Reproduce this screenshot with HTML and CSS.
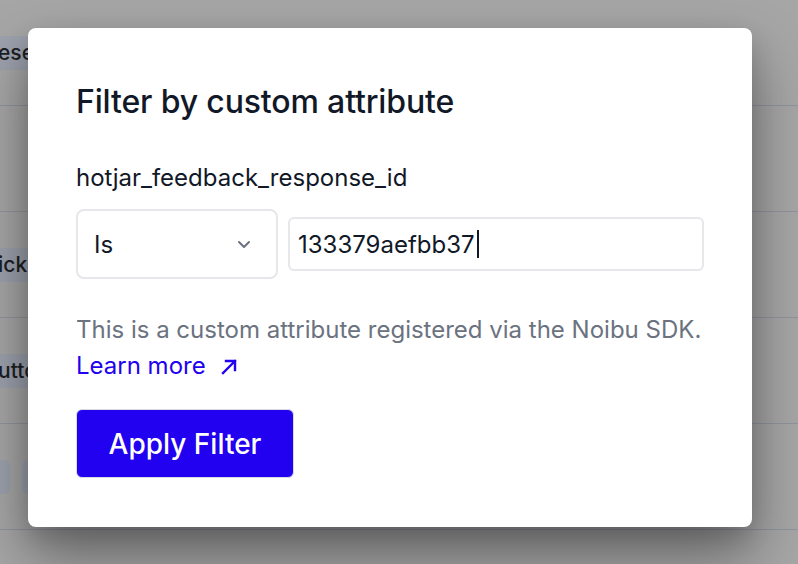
FILE: index.html
```html
<!DOCTYPE html>
<html>
<head>
<meta charset="utf-8">
<link rel="stylesheet" href="styles.css">
</head>
<body>
<div class="page">
  <div class="row"><span class="tag">ese</span></div>
  <div class="row"></div>
  <div class="row"><span class="tag">ick</span></div>
  <div class="row"><span class="tag">utto</span></div>
  <div class="row"><span class="box box-a"></span><span class="box box-b"></span></div>
  <div class="row row-last"></div>
</div>
<div class="modal">
  <h1 class="title">Filter by custom attribute</h1>
  <div class="label">hotjar_feedback_response_id</div>
  <div class="controls">
    <div class="select">
      <span>Is</span>
      <svg class="chev" width="14" height="9" viewBox="0 0 14 9"><path d="M2 2 L7 7 L12 2" fill="none" stroke="#6b7280" stroke-width="2" stroke-linecap="round" stroke-linejoin="round"/></svg>
    </div>
    <div class="input"><span>133379aefbb37</span><span class="caret"></span></div>
  </div>
  <p class="desc"><span class="nowrap">This is a custom attribute registered via the Noibu SDK.</span><br>
    <a class="link" href="#">Learn more <svg class="arrow" width="18" height="18" viewBox="0 0 18 18"><path d="M3 15 L15 3 M6 3 H15 V12" fill="none" stroke="#2200f0" stroke-width="2.4" stroke-linecap="square"/></svg></a></p>
  <button class="btn">Apply Filter</button>
</div>
</body>
</html>
```
FILE: styles.css
```css
html, body {
  margin: 0;
  padding: 0;
}
body {
  width: 798px;
  height: 564px;
  overflow: hidden;
  background: #a6a6a6;
  font-family: Inter, "Noto Sans", sans-serif;
  position: relative;
}
.page {
  display: flex;
  flex-direction: column;
}
.row {
  height: 105px;
  border-bottom: 1px solid #90959c;
  display: flex;
  align-items: center;
  gap: 12px;
}
.row:first-child {
  align-items: flex-start;
  padding-top: 36px;
  height: 69px;
}
.row-last {
  height: 33px;
  border-bottom: 0;
}
.tag {
  background: #9ca1ad;
  color: #1c1f24;
  font-size: 21px;
  font-weight: 500;
  height: 34px;
  line-height: 34px;
  padding: 0 20px 0 0;
  margin-left: -2px;
  border-radius: 4px;
}
.box {
  display: block;
  height: 34px;
  width: 30px;
  background: #9ca1ad;
  border-radius: 6px;
}
.box-a { margin-left: -20px; }
.modal {
  position: absolute;
  left: 28px;
  top: 28px;
  width: 724px;
  height: 499px;
  box-sizing: border-box;
  padding: 56px 48px 0;
  background: #fff;
  border-radius: 8px;
  box-shadow: 0 30px 60px rgba(0, 0, 0, 0.38), 0 10px 24px rgba(0, 0, 0, 0.14);
}
.title {
  margin: 0;
  font-size: 32px;
  line-height: 36px;
  font-weight: 500;
  color: #111827;
  letter-spacing: -0.15px;
}
.label {
  margin-top: 44px;
  font-size: 24px;
  line-height: 28px;
  color: #111827;
}
.controls {
  margin-top: 17px;
  display: flex;
  align-items: center;
  gap: 10px;
}
.select {
  width: 202px;
  height: 70px;
  box-sizing: border-box;
  border: 2px solid #e5e7eb;
  border-radius: 8px;
  display: flex;
  align-items: center;
  justify-content: space-between;
  padding: 0 25px 0 16px;
  font-size: 24px;
  color: #111827;
}
.chev { display: block; }
.input {
  flex: 1;
  height: 54px;
  box-sizing: border-box;
  border: 2px solid #e5e7eb;
  border-radius: 6px;
  display: flex;
  align-items: center;
  padding: 0 8px;
  font-size: 24px;
  color: #111827;
}
.caret {
  display: inline-block;
  width: 2px;
  height: 28px;
  background: #111827;
  margin-left: 2px;
}
.desc {
  margin: 33px 0 0;
  font-size: 24px;
  line-height: 36px;
  color: #6b7280;
}
.nowrap {
  white-space: nowrap;
}
.link {
  color: #2200f0;
  text-decoration: none;
}
.arrow {
  vertical-align: -2px;
  margin-left: 8px;
}
.btn {
  margin-top: 25px;
  width: 218px;
  height: 69px;
  background: #2200f0;
  color: #fff;
  border: 1px solid #d9dbe3;
  border-radius: 6px;
  font-family: Inter, "Noto Sans", sans-serif;
  font-size: 28px;
  font-weight: 500;
  display: block;
}
```
